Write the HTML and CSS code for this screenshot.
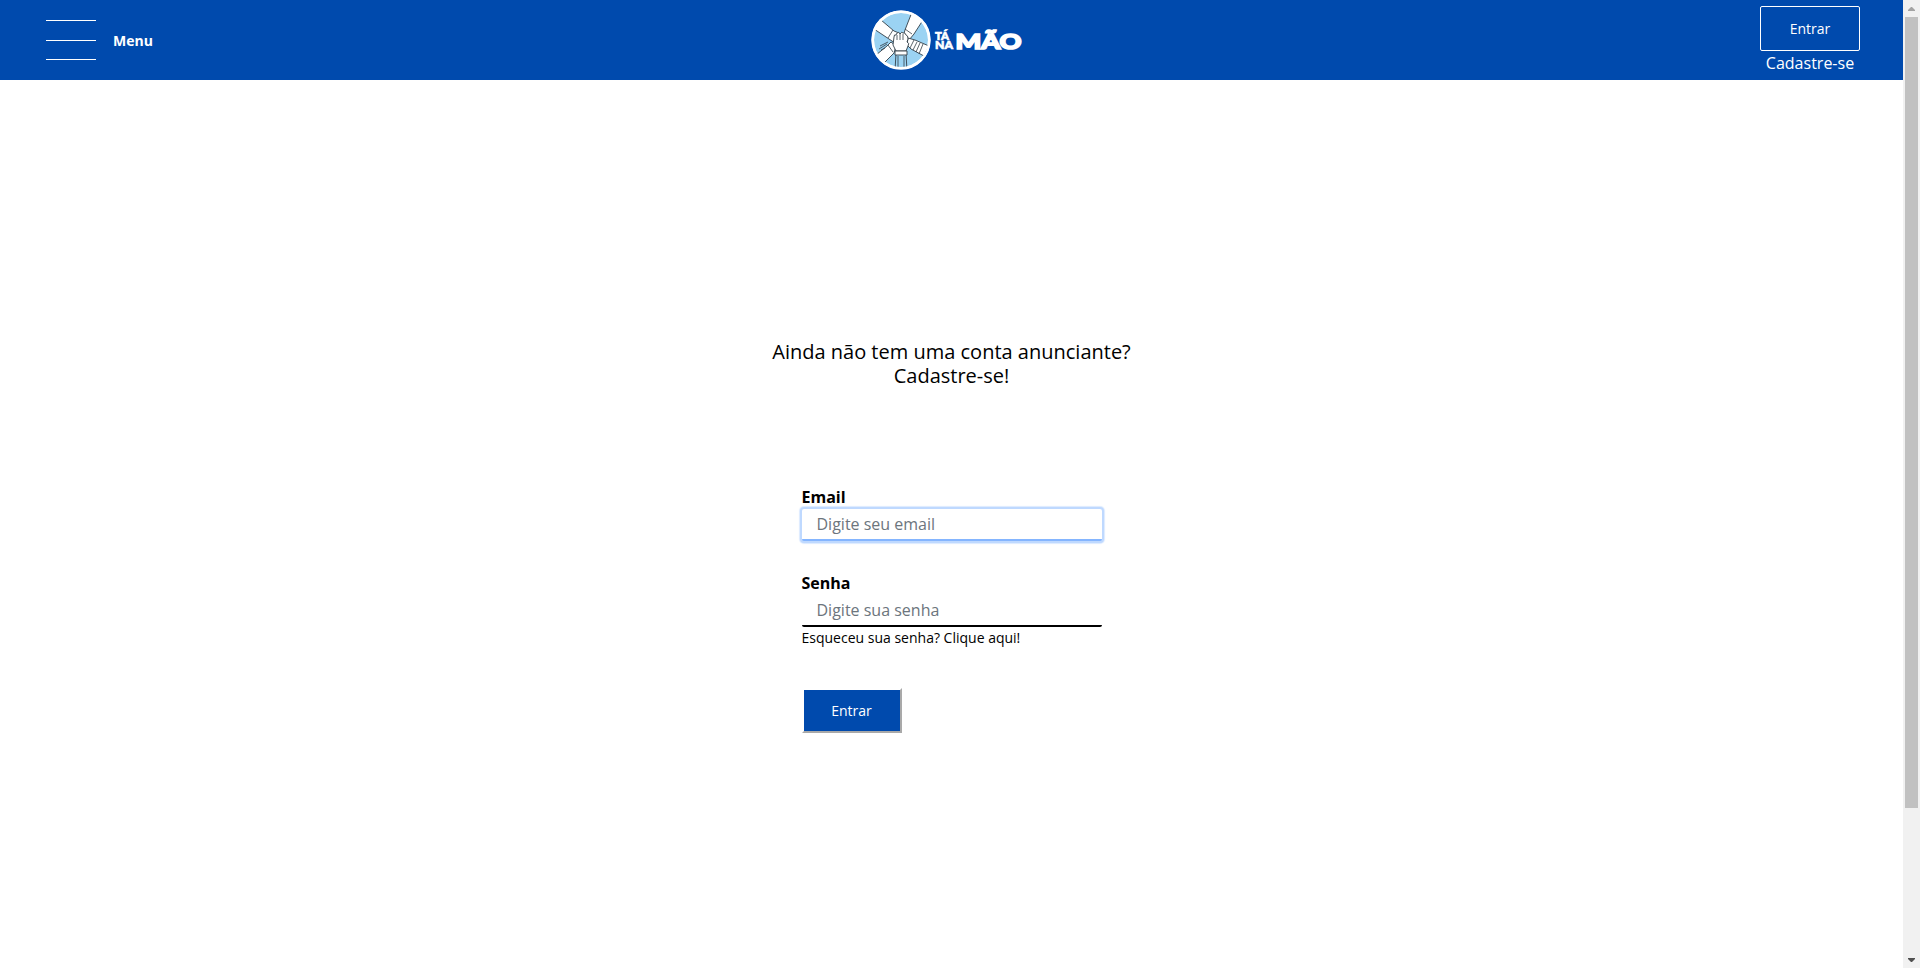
FILE: index.html
```html
<!DOCTYPE html>
<html lang="pt-BR">
<head>
<meta charset="utf-8">
<title>Tá na Mão</title>
<link rel="stylesheet" href="styles.css">
</head>
<body>
<div class="page">
  <header class="header">
    <div class="menu">
      <div class="menu-icon"><span></span><span></span><span></span></div>
      <span class="menu-label">Menu</span>
    </div>
    <svg class="logo" viewBox="0 0 152 62" width="152" height="62">
      <defs><clipPath id="disc"><circle cx="30" cy="31" r="28"/></clipPath></defs>
      <circle cx="30" cy="31" r="29.5" fill="#fff"/>
      <circle cx="30" cy="31" r="27" fill="#9bd3f3"/>
      <g clip-path="url(#disc)" fill="#fff" stroke="#333f48" stroke-width=".9" stroke-linejoin="round">
        <path d="M3 20 10 11 23 22 28 24 30 29 24 34 18 30Z"/>
        <path d="M41 3 52 11 43 25 38 31 32 28 34 21Z"/>
        <path d="M53 47 58 37 44 31 37 29 36 36 40 40Z"/>
        <path d="M5 46 13 54 23 44 25 37 20 33 16 37Z"/>
        <path d="M25 44H35L36 62H24Z" fill="#9bd3f3"/>
        <path d="M25 42 22 36 23 28Q23 25 25 26L26 24Q28 22 29 25 31 22 32 24 34 23 35 26 37 26 37 30L36 33Q39 34 37 37L35 42Z"/>
        <path d="M24 42H36V46H24Z"/>
        <path d="M22 21 17 29M34 20 41 25M17 36 22 43M43 31 39 39M46 33 42 41M49 34 45 43M52 35 48 45M26 26V31M29 25V31M32 25V31M27 47V60M33 47V60" fill="none" stroke-width=".8"/>
        <path d="M9 37 17 33M8 40 16 35M10 41 14 39" fill="none" stroke-width=".8"/>
      </g>
      <circle cx="30" cy="31" r="28.3" fill="none" stroke="#fff" stroke-width="2.6"/>
      <text class="logo-small" x="64" y="30.5" textLength="14" lengthAdjust="spacingAndGlyphs">TÁ</text>
      <text class="logo-small" x="64" y="39.5" textLength="18" lengthAdjust="spacingAndGlyphs">NA</text>
      <text class="logo-big" x="84.5" y="39.5" textLength="66" lengthAdjust="spacingAndGlyphs">MÃO</text>
    </svg>
    <div class="account">
      <a class="login">Entrar</a>
      <a class="signup">Cadastre-se</a>
    </div>
  </header>
  <main class="main">
    <h1 class="title">Ainda não tem uma conta anunciante?<br>Cadastre-se!</h1>
    <form class="form">
      <label class="label" for="email">Email</label>
      <input class="field focused" id="email" type="email" placeholder="Digite seu email">
      <label class="label second" for="senha">Senha</label>
      <input class="field" id="senha" type="password" placeholder="Digite sua senha">
      <a class="forgot">Esqueceu sua senha? Clique aqui!</a>
      <button class="submit" type="button">Entrar</button>
    </form>
  </main>
</div>
<div class="scrollbar">
  <svg class="arrow" viewBox="0 0 17 17"><path d="M5 11V10L8 7H9L12 10V11Z" fill="#a3a3a3"/></svg>
  <div class="thumb"></div>
  <svg class="arrow" viewBox="0 0 17 17"><path d="M5 7V8L8 11H9L12 8V7Z" fill="#505050"/></svg>
</div>
</body>
</html>
```
FILE: styles.css
```css
* { box-sizing: border-box; }
body {
  margin: 0;
  display: flex;
  height: 968px;
  overflow: hidden;
  background: #fff;
  color: #000;
  font-family: "Open Sans", sans-serif;
}
.page { flex: 1; }
.header {
  display: grid;
  grid-template-columns: 871px 152px 1fr;
  height: 80px;
  background: #004aad;
  color: #fff;
}
.menu {
  display: flex;
  align-items: center;
  gap: 17px;
  padding-left: 46px;
}
.menu-icon {
  display: flex;
  flex-direction: column;
  justify-content: space-between;
  width: 50px;
  height: 40px;
}
.menu-icon span { height: 1px; background: #fff; }
.menu-label { font-size: 14px; font-weight: 700; line-height: 20px; padding-top: 1px; }
.logo { margin-top: 9px; }
.logo-small, .logo-big {
  fill: #fff;
  stroke: #fff;
  font-family: Lato, sans-serif;
  font-weight: 900;
}
.logo-small { font-size: 10.5px; stroke-width: .6px; }
.logo-big { font-size: 20.5px; stroke-width: 1.6px; }
.account {
  justify-self: end;
  display: flex;
  flex-direction: column;
  align-items: center;
  width: 100px;
  margin: 6px 43px 0 0;
}
.login {
  width: 100px;
  height: 45px;
  border: 1px solid #fff;
  border-radius: 2px;
  font-size: 14px;
  line-height: 44px;
  text-align: center;
}
.signup { font-size: 16px; line-height: 24px; }
.main {
  display: flex;
  flex-direction: column;
  align-items: center;
  padding-top: 260px;
}
.title {
  margin: 0;
  font-size: 20px;
  font-weight: 400;
  line-height: 24px;
  text-align: center;
}
.form {
  display: flex;
  flex-direction: column;
  width: 300px;
  margin-top: 97px;
}
.label { font-size: 16px; font-weight: 700; line-height: 24px; }
.second { margin-top: 30px; }
.field {
  width: 300px;
  height: 32px;
  padding: 0 15px;
  border: 0;
  border-bottom: 2px solid #000;
  border-radius: 2px;
  background: #fff;
  font: 16px/24px "Open Sans", sans-serif;
}
.field::placeholder { color: #6c757d; opacity: 1; }
.focused { border-bottom-color: #84b5ff; box-shadow: 0 0 0 2px #bfd9ff, 0 0 1px 3px #dceaff; }
.forgot { font-size: 14px; line-height: 21px; }
.submit {
  width: 100px;
  height: 45px;
  margin-top: 40px;
  padding: 0;
  border: 2px solid;
  border-color: #fff #a9a9a9 #a9a9a9 #fff;
  background: #004aad;
  color: #fff;
  font: 14px/20px "Open Sans", sans-serif;
}
.scrollbar { display: flex; flex-direction: column; width: 17px; background: #f1f1f1; }
.arrow { width: 17px; height: 17px; flex: none; }
.thumb { width: 13px; height: 791px; margin: 0 2px auto; background: #c1c1c1; }
```
